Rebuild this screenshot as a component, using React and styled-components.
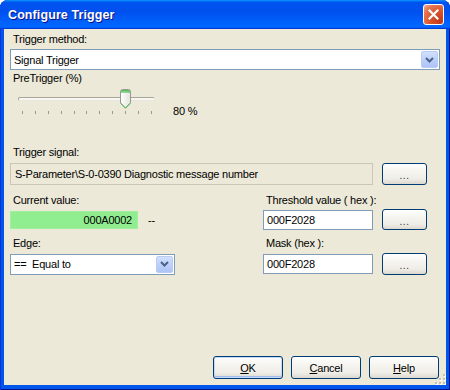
import styled, { createGlobalStyle } from "styled-components";

const GlobalStyle = createGlobalStyle`
  html, body {
    margin: 0;
    padding: 0;
    background: #ffffff;
  }
  body {
    font-family: "Liberation Sans", Arial, sans-serif;
    font-size: 11px;
    letter-spacing: -0.22px;
    color: #000;
  }
`;

const Window = styled.div`
  width: 450px;
  height: 390px;
  box-sizing: border-box;
  display: flex;
  flex-direction: column;
  background: #0055ea;
  border-radius: 8px 8px 0 0;
  overflow: hidden;
  box-shadow: inset 1px 0 #0831d9, inset -1px 0 #00138c, inset 0 -1px #00138c;
`;

const TitleBar = styled.div`
  height: 29px;
  flex-shrink: 0;
  display: flex;
  align-items: center;
  justify-content: space-between;
  padding: 0 6px 0 8px;
  background: linear-gradient(
    180deg,
    #0997ff,
    #0053ee 8%,
    #0050ee 40%,
    #0066ff 88%,
    #0066ff 93%,
    #005bff 95%,
    #003dd7 96%,
    #003dd7
  );
`;

const Title = styled.span`
  color: #fff;
  font-weight: bold;
  font-size: 12.5px;
  letter-spacing: 0.1px;
  padding-top: 1px;
  text-shadow: 1px 1px #0f1089;
`;

const CloseButton = styled.div`
  width: 21px;
  height: 21px;
  box-sizing: border-box;
  border: 1px solid #fff;
  border-radius: 3px;
  background: radial-gradient(
    circle at 85% 85%,
    #c1391a 0%,
    #d9552c 45%,
    #e5764f 75%,
    #f3b39c 100%
  );
  display: flex;
  align-items: center;
  justify-content: center;
`;

const Client = styled.div`
  position: relative;
  flex: 1;
  margin: 0 4px 5px 4px;
  background: #ece9d8;
  padding: 4px 6px 6px 6px;
  display: flex;
  flex-direction: column;
`;

const Label = styled.div`
  line-height: 13px;
  padding-left: 3px;
  margin-top: ${(p) => p.$top || 0}px;
  white-space: nowrap;
`;

const Combo = styled.div`
  display: flex;
  align-items: center;
  box-sizing: border-box;
  height: 21px;
  width: ${(p) => (p.$width ? `${p.$width}px` : "auto")};
  margin-top: ${(p) => p.$top || 0}px;
  border: 1px solid #7f9db9;
  background: #fff;
  padding: 1px;
`;

const ComboText = styled.span`
  flex: 1;
  padding-left: 2px;
  white-space: pre;
`;

const ComboArrow = styled.div`
  width: 17px;
  height: 17px;
  box-sizing: border-box;
  border: 1px solid #b9ccf6;
  border-radius: 2px;
  background: linear-gradient(180deg, #d2e0fd 0%, #bcd0fa 50%, #aec4f6 100%);
  display: flex;
  align-items: center;
  justify-content: center;
`;

const SliderRow = styled.div`
  display: flex;
  align-items: flex-start;
  padding-left: 8px;
`;

const Slider = styled.div`
  width: 137px;
  display: flex;
  flex-direction: column;
`;

const TrackArea = styled.div`
  position: relative;
  height: 20px;
  margin-top: 4px;
  display: flex;
  align-items: center;
`;

const Track = styled.div`
  flex: 1;
  height: 4px;
  box-sizing: border-box;
  border: 1px solid #a8a69c;
  border-bottom-color: #e8e6dc;
  border-right-color: #e8e6dc;
  border-radius: 2px;
  background: #f7f6f1;
`;

const Thumb = styled.svg`
  position: absolute;
  top: 0;
`;

const Ticks = styled.div`
  display: flex;
  justify-content: space-between;
  padding: 0 3px 0 4px;
  margin-top: 2px;
`;

const Tick = styled.span`
  width: 1px;
  height: 3px;
  background: #9a9890;
`;

const SliderValue = styled.span`
  margin: 20px 0 0 18px;
  line-height: 13px;
`;

const FieldRow = styled.div`
  display: flex;
  align-items: center;
  gap: 9px;
  margin-top: ${(p) => p.$top || 0}px;
`;

const ReadOnlyField = styled.div`
  box-sizing: border-box;
  width: 363px;
  height: 22px;
  display: flex;
  align-items: center;
  padding-left: 4px;
  border: 1px solid #c9c7ba;
  background: #ece9d8;
  white-space: nowrap;
`;

const TextInput = styled.div`
  box-sizing: border-box;
  width: 110px;
  height: ${(p) => p.$h || 20}px;
  display: flex;
  align-items: center;
  padding-left: 3px;
  border: 1px solid #7f9db9;
  background: #fff;
`;

const ValueBox = styled.div`
  box-sizing: border-box;
  width: 128px;
  height: 18px;
  display: flex;
  align-items: center;
  justify-content: flex-end;
  padding-right: 5px;
  background: #90ee90;
  border: 1px solid #9eef9e;
`;

const Dash = styled.span`
  margin-left: 10px;
`;

const Grid = styled.div`
  display: grid;
  grid-template-columns: 244px 110px 45px;
  column-gap: 9px;
  align-items: center;
`;

const Cell = styled.div`
  grid-column: ${(p) => p.$col || "auto"};
  display: flex;
  align-items: center;
  margin-top: ${(p) => p.$top || 0}px;
`;

const Button = styled.button`
  box-sizing: border-box;
  width: ${(p) => p.$w}px;
  height: ${(p) => p.$h}px;
  padding: 0;
  border: 1px solid #003c74;
  border-radius: 3px;
  background: linear-gradient(
    180deg,
    #ffffff 0%,
    #f6f5f0 35%,
    #eeede7 75%,
    #dcd8ce 100%
  );
  box-shadow: ${(p) =>
    p.$default ? "inset 0 0 0 1px #c6d8f8, inset 0 -1px 0 1px #a4bdf0" : "none"};
  font-family: "Liberation Sans", Arial, sans-serif;
  font-size: 11px;
  letter-spacing: -0.22px;
  color: #000;
  cursor: default;
`;

const Dots = styled.span`
  color: #333;
  font-size: 10px;
  letter-spacing: 0.5px;
  position: relative;
  top: 1px;
`;

const Footer = styled.div`
  margin-top: auto;
  display: flex;
  justify-content: flex-end;
  gap: 8px;
  padding-right: 1px;
`;

const Grip = styled.svg`
  position: absolute;
  right: 0;
  bottom: 0;
`;

const Chevron = () => (
  <svg width="9" height="6" viewBox="0 0 9 6">
    <path
      d="M1 1 L4.5 4.5 L8 1"
      fill="none"
      stroke="#4d6185"
      strokeWidth="2"
    />
  </svg>
);

const Select = ({ value, width, top }) => (
  <Combo $width={width} $top={top}>
    <ComboText>{value}</ComboText>
    <ComboArrow>
      <Chevron />
    </ComboArrow>
  </Combo>
);

const EllipsisButton = ({ h = 22 }) => (
  <Button $w={45} $h={h}>
    <Dots>...</Dots>
  </Button>
);

const PreTrigger = ({ value }) => {
  const tickCount = 11;
  const left = 4 + (value / 100) * 129 - 5.5;
  return (
    <SliderRow>
      <Slider>
        <TrackArea>
          <Track />
          <Thumb
            width="11"
            height="20"
            viewBox="0 0 11 20"
            style={{ left: `${left}px` }}
          >
            <defs>
              <linearGradient id="thumbBody" x1="0" y1="0" x2="1" y2="0">
                <stop offset="0" stopColor="#ffffff" />
                <stop offset="1" stopColor="#e4e3dc" />
              </linearGradient>
            </defs>
            <path
              d="M0.5 2.5 Q0.5 0.5 2.5 0.5 H8.5 Q10.5 0.5 10.5 2.5 V14 L5.5 19.3 L0.5 14 Z"
              fill="url(#thumbBody)"
              stroke="#9a9a90"
            />
            <path d="M1 2.5 Q1 1 2.5 1 H8.5 Q10 1 10 2.5 V3.5 H1 Z" fill="#3eb34a" />
            <path d="M1.5 2.2 H9.5" stroke="#8fe08f" strokeWidth="1" />
            <path
              d="M1 14.3 L5.5 19 L10 14.3"
              fill="none"
              stroke="#4dbb55"
              strokeWidth="1"
            />
          </Thumb>
        </TrackArea>
        <Ticks>
          {Array.from({ length: tickCount }).map((_, i) => (
            <Tick key={i} />
          ))}
        </Ticks>
      </Slider>
      <SliderValue>{value} %</SliderValue>
    </SliderRow>
  );
};

const App = () => {
  return (
    <>
      <GlobalStyle />
      <Window>
        <TitleBar>
          <Title>Configure Trigger</Title>
          <CloseButton>
            <svg width="11" height="11" viewBox="0 0 11 11">
              <path
                d="M1.5 1.5 L9.5 9.5 M9.5 1.5 L1.5 9.5"
                stroke="#fff"
                strokeWidth="2.2"
                strokeLinecap="square"
              />
            </svg>
          </CloseButton>
        </TitleBar>
        <Client>
          <Label>Trigger method:</Label>
          <Select value="Signal Trigger" top={3} />
          <Label $top={2}>PreTrigger (%)</Label>
          <PreTrigger value={80} />

          <Label $top={28}>Trigger signal:</Label>
          <FieldRow $top={4}>
            <ReadOnlyField>
              S-Parameter\S-0-0390 Diagnostic message number
            </ReadOnlyField>
            <EllipsisButton h={22} />
          </FieldRow>

          <Grid>
            <Cell $col="1" $top={9}>
              <Label>Current value:</Label>
            </Cell>
            <Cell $col="2 / span 2" $top={9}>
              <Label>Threshold value ( hex ):</Label>
            </Cell>

            <Cell $col="1" $top={2}>
              <ValueBox>000A0002</ValueBox>
              <Dash>--</Dash>
            </Cell>
            <Cell $col="2" $top={2}>
              <TextInput>000F2028</TextInput>
            </Cell>
            <Cell $col="3" $top={2}>
              <EllipsisButton h={21} />
            </Cell>

            <Cell $col="1" $top={7}>
              <Label>Edge:</Label>
            </Cell>
            <Cell $col="2 / span 2" $top={7}>
              <Label>Mask (hex ):</Label>
            </Cell>

            <Cell $col="1" $top={3}>
              <Select value="==  Equal to" width={165} />
            </Cell>
            <Cell $col="2" $top={3}>
              <TextInput>000F2028</TextInput>
            </Cell>
            <Cell $col="3" $top={3}>
              <EllipsisButton h={22} />
            </Cell>
          </Grid>

          <Footer>
            <Button $w={70} $h={23} $default>
              <u>O</u>K
            </Button>
            <Button $w={70} $h={23}>
              <u>C</u>ancel
            </Button>
            <Button $w={70} $h={23}>
              <u>H</u>elp
            </Button>
          </Footer>
          <Grip width="12" height="12" viewBox="0 0 12 12">
            {[
              [9, 1],
              [9, 5],
              [5, 5],
              [9, 9],
              [5, 9],
              [1, 9],
            ].map(([x, y]) => (
              <g key={`${x}-${y}`}>
                <rect x={x + 1} y={y + 1} width="2" height="2" fill="#ffffff" />
                <rect x={x} y={y} width="2" height="2" fill="#c5c2b2" />
              </g>
            ))}
          </Grip>
        </Client>
      </Window>
    </>
  );
};

export default App;
